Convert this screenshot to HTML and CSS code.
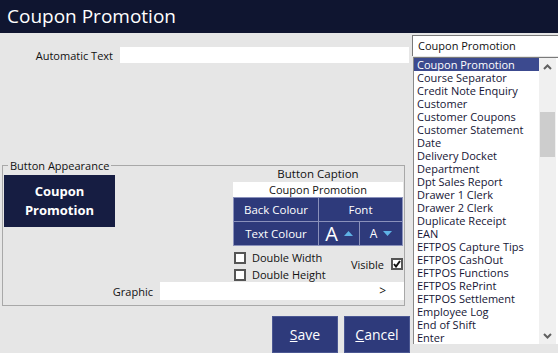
FILE: index.html
```html
<!DOCTYPE html>
<html lang="en">
<head>
    <meta charset="UTF-8">
    <title>Coupon Promotion</title>
    <link rel="stylesheet" href="styles.css">
</head>
<body>

<div class="titlebar">Coupon Promotion</div>

<div class="main">
    <div class="left">
        <div class="auto-row">
            <div class="row-label">Automatic Text</div>
            <div class="text-field"></div>
        </div>

        <div class="group">
            <div class="legend">Button Appearance</div>
            <div class="group-top">
                <div class="preview">Coupon<br>Promotion</div>
                <div class="caption-col">
                    <div class="caption-label">Button Caption</div>
                    <div class="caption-field">Coupon Promotion</div>
                    <div class="style-grid">
                        <div class="cell">Back Colour</div>
                        <div class="cell span2">Font</div>
                        <div class="cell">Text Colour</div>
                        <div class="cell">
                            <span class="big-a">A</span>
                            <svg class="tri" width="9" height="5" viewBox="0 0 9 5"><polygon points="0,5 4.5,0 9,5" fill="#5fb2e6"/></svg>
                        </div>
                        <div class="cell">
                            <span class="small-a">A</span>
                            <svg class="tri" width="9" height="5" viewBox="0 0 9 5"><polygon points="0,0 9,0 4.5,5" fill="#5fb2e6"/></svg>
                        </div>
                    </div>
                    <div class="checks">
                        <div class="checks-left">
                            <div class="check"><span class="box"></span>Double Width</div>
                            <div class="check"><span class="box"></span>Double Height</div>
                        </div>
                        <div class="visible">
                            Visible
                            <span class="box">
                                <svg width="8" height="8" viewBox="0 0 8 8"><polyline points="1,4 3,6.5 7,1" fill="none" stroke="#111" stroke-width="2"/></svg>
                            </span>
                        </div>
                    </div>
                </div>
            </div>
            <div class="graphic-row">
                <div class="row-label">Graphic</div>
                <div class="text-field graphic-field">&gt;</div>
            </div>
        </div>

        <div class="actions">
            <button class="action-button"><u>S</u>ave</button>
            <button class="action-button"><u>C</u>ancel</button>
        </div>
    </div>

    <div class="right">
        <div class="combo">Coupon Promotion</div>
        <div class="list">
            <ul class="items" id="items"></ul>
            <div class="scrollbar">
                <div class="arrow">
                    <svg width="9" height="6" viewBox="0 0 9 6"><polyline points="1,5 4.5,1.5 8,5" fill="none" stroke="#606060" stroke-width="2"/></svg>
                </div>
                <div class="track"><div class="thumb"></div></div>
                <div class="arrow">
                    <svg width="9" height="6" viewBox="0 0 9 6"><polyline points="1,1 4.5,4.5 8,1" fill="none" stroke="#606060" stroke-width="2"/></svg>
                </div>
            </div>
        </div>
    </div>
</div>

<script>
    const functions = [
        "Coupon Promotion", "Course Separator", "Credit Note Enquiry", "Customer",
        "Customer Coupons", "Customer Statement", "Date", "Delivery Docket",
        "Department", "Dpt Sales Report", "Drawer 1 Clerk", "Drawer 2 Clerk",
        "Duplicate Receipt", "EAN", "EFTPOS Capture Tips", "EFTPOS CashOut",
        "EFTPOS Functions", "EFTPOS RePrint", "EFTPOS Settlement", "Employee Log",
        "End of Shift", "Enter"
    ];

    const list = document.getElementById("items");
    functions.forEach((name, i) => {
        list.innerHTML += `<li class="item${i === 0 ? ' selected' : ''}">${name}</li>`;
    });
</script>
</body>
</html>
```

FILE: styles.css
```css
body {
    margin: 0;
    width: 558px;
    height: 353px;
    overflow: hidden;
    background-color: #e6e6e6;
    font-family: "Open Sans", "Noto Sans", sans-serif;
    font-size: 11px;
    color: #111;
}
.titlebar {
    height: 33px;
    line-height: 33px;
    padding-left: 7px;
    background-color: #0f1530;
    color: #fff;
    font-size: 19px;
}
.main {
    display: flex;
    height: 320px;
}
.left {
    width: 410px;
    display: flex;
    flex-direction: column;
}
.auto-row {
    display: flex;
    align-items: center;
    gap: 7px;
    margin-top: 14px;
    margin-right: 1px;
}
.auto-row .row-label {
    width: 113px;
}
.row-label {
    text-align: right;
    flex: none;
}
.text-field {
    flex: 1;
    height: 16px;
    background-color: #fff;
}
.group {
    margin: 102px 5px 0 2px;
    border: 1px solid #a8a8a8;
    padding: 0 0 5px 0;
}
.legend {
    width: fit-content;
    line-height: 15px;
    margin: -8px 0 -7px 5px;
    padding: 0 2px;
    background-color: #e6e6e6;
}
.group-top {
    display: flex;
    justify-content: space-between;
}
.preview {
    width: 111px;
    height: 52px;
    margin: 9px 0 0 1px;
    background-color: #161d42;
    color: #fff;
    font-weight: bold;
    font-size: 13px;
    line-height: 19px;
    text-align: center;
    display: flex;
    align-items: center;
    justify-content: center;
}
.caption-col {
    width: 170px;
    margin: 1px 1px 0 0;
}
.caption-label {
    text-align: center;
    line-height: 14px;
    font-size: 11.5px;
}
.caption-field {
    margin-top: 1px;
    height: 15px;
    line-height: 15px;
    background-color: #fff;
    text-align: center;
}
.style-grid {
    display: grid;
    grid-template-columns: 84px 40px 1fr;
    grid-template-rows: 23px 23px;
    gap: 1px;
    padding: 1px;
    background-color: #8a91bb;
}
.cell {
    background-color: #2e3a7b;
    color: #fff;
    font-size: 11.5px;
    display: flex;
    align-items: center;
    justify-content: center;
    gap: 6px;
}
.span2 {
    grid-column: span 2;
}
.big-a {
    font-size: 20px;
    line-height: 20px;
}
.small-a {
    font-size: 12px;
}
.checks {
    display: flex;
    justify-content: space-between;
    margin-top: 4px;
}
.checks-left {
    display: flex;
    flex-direction: column;
    gap: 2px;
}
.check {
    display: flex;
    align-items: center;
    gap: 6px;
    height: 15px;
    margin-left: 1px;
}
.box {
    width: 8px;
    height: 8px;
    border: 2px solid #555;
    background-color: #fff;
    display: flex;
    align-items: center;
    justify-content: center;
}
.visible {
    display: flex;
    align-items: center;
    gap: 7px;
    height: 14px;
    margin-top: 7px;
}
.graphic-row {
    display: flex;
    align-items: center;
    gap: 7px;
}
.graphic-row .row-label {
    width: 150px;
}
.graphic-field {
    height: 18px;
    line-height: 18px;
    text-align: right;
    padding-right: 18px;
    font-size: 12px;
}
.actions {
    display: flex;
    justify-content: flex-end;
    gap: 6px;
    margin-top: 9px;
}
.action-button {
    width: 66px;
    height: 37px;
    margin-top: 1px;
    background-color: #2e3a7b;
    border: 1px solid #4b5792;
    color: #fff;
    font-family: "Open Sans", sans-serif;
    font-size: 14px;
    padding: 0;
}
.right {
    width: 146px;
    margin-left: 2px;
    display: flex;
    flex-direction: column;
}
.combo {
    margin-top: 2px;
    height: 20px;
    line-height: 20px;
    padding-left: 5px;
    background-color: #fff;
    border-top: 1px solid #7a7a7a;
    border-left: 1px solid #7a7a7a;
}
.list {
    margin-top: 1px;
    margin-left: 1px;
    height: 286px;
    display: flex;
    background-color: #fff;
    border-top: 1px solid #7a7a7a;
    border-left: 1px solid #8a8a8a;
}
.items {
    list-style: none;
    margin: 0;
    padding: 0;
    flex: 1;
}
.item {
    height: 13px;
    line-height: 13px;
    padding-left: 3px;
    color: #151535;
    white-space: nowrap;
}
.selected {
    background-color: #3c4a8f;
    color: #fff;
}
.scrollbar {
    width: 17px;
    margin-right: 2px;
    background-color: #f0f0f0;
    display: flex;
    flex-direction: column;
}
.arrow {
    height: 17px;
    display: flex;
    align-items: center;
    justify-content: center;
}
.track {
    flex: 1;
}
.thumb {
    margin: 37px 1px 0 1px;
    height: 45px;
    background-color: #cdcdcd;
}
```
